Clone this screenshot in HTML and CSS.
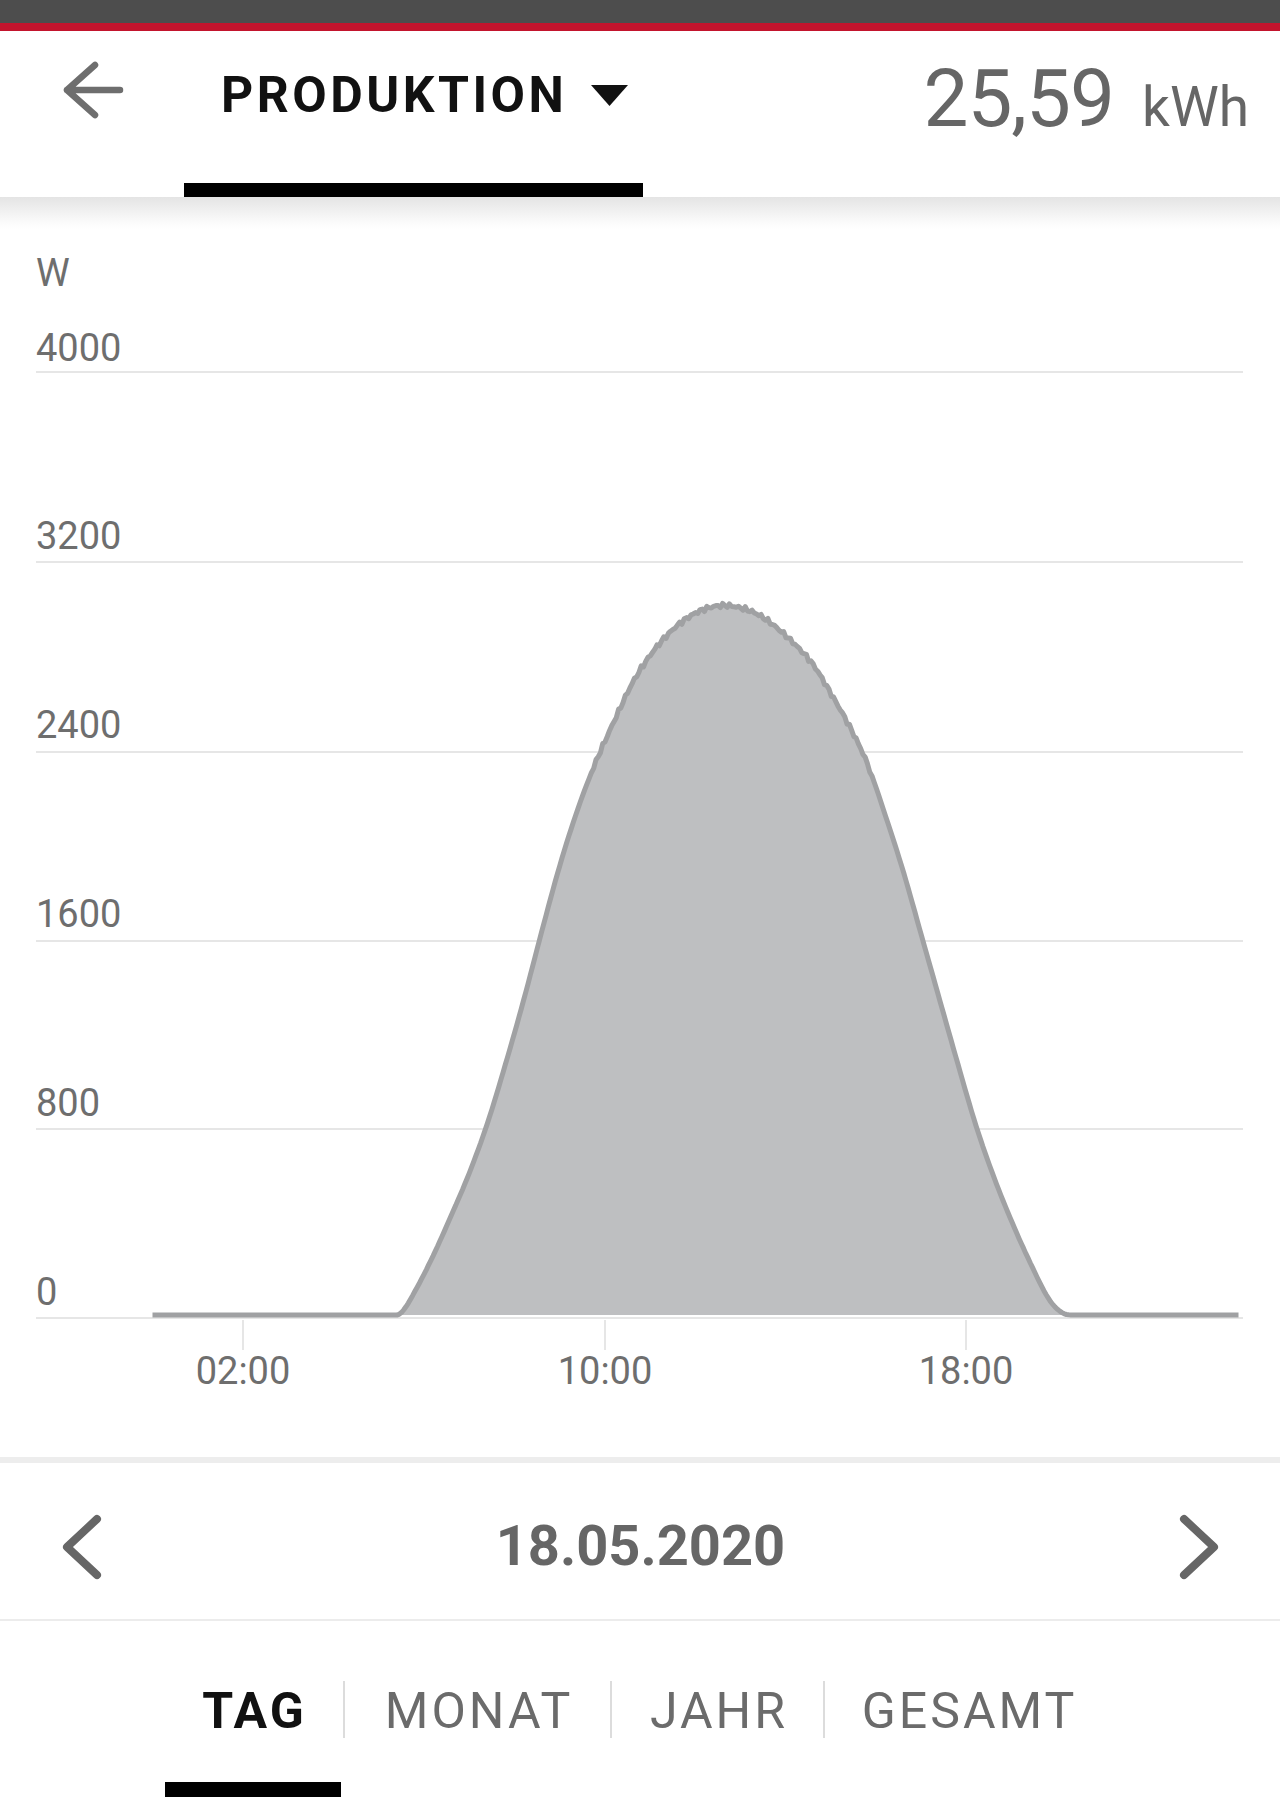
FILE: index.html
```html
<!DOCTYPE html>
<html lang="de">
<head>
<meta charset="UTF-8" />
<title>Produktion</title>
<link rel="stylesheet" href="styles.css">
</head>
<body>

<div class="statusbar"></div>

<header class="topbar">
  <button class="back" aria-label="Zurück">
    <svg width="62" height="58" viewBox="0 0 62 58">
      <path d="M33 4 L5 29 L33 54 M5 29 H58" fill="none" stroke="#6e6e6e" stroke-width="6.5" stroke-linecap="round" stroke-linejoin="round"/>
    </svg>
  </button>
  <div class="tab">
    <div class="tab-label">PRODUKTION
      <svg class="caret" width="37" height="21" viewBox="0 0 37 21"><path d="M0 0 H37 L18.5 21 Z" fill="#111"/></svg>
    </div>
  </div>
  <div class="total">
    <span class="total-value">25,59</span>
    <span class="total-unit">kWh</span>
  </div>
</header>

<div class="shade"></div>

<section class="chart">
  <svg width="1280" height="1228" viewBox="0 0 1280 1228">
    <g class="grid">
      <line x1="36" x2="1243" y1="143" y2="143"/>
      <line x1="36" x2="1243" y1="333" y2="333"/>
      <line x1="36" x2="1243" y1="523" y2="523"/>
      <line x1="36" x2="1243" y1="712" y2="712"/>
      <line x1="36" x2="1243" y1="900" y2="900"/>
      <line x1="36" x2="1243" y1="1089" y2="1089"/>
      <line x1="243" x2="243" y1="1091" y2="1121"/>
      <line x1="605" x2="605" y1="1091" y2="1121"/>
      <line x1="966" x2="966" y1="1091" y2="1121"/>
    </g>
    <g class="axis-label">
      <text x="36" y="57">W</text>
      <text x="36" y="132">4000</text>
      <text x="36" y="320">3200</text>
      <text x="36" y="509">2400</text>
      <text x="36" y="698">1600</text>
      <text x="36" y="887">800</text>
      <text x="36" y="1076">0</text>
    </g>
    <g class="axis-label time">
      <text x="243" y="1155">02:00</text>
      <text x="605" y="1155">10:00</text>
      <text x="966" y="1155">18:00</text>
    </g>
    <path id="area" class="area" d=""/>
    <path id="line" class="line" d=""/>
  </svg>
</section>

<div class="divider"></div>

<nav class="datebar">
  <svg width="48" height="72" viewBox="0 0 48 72"><path d="M40 8 L10 36 L40 64" fill="none" stroke="#666" stroke-width="8" stroke-linecap="round" stroke-linejoin="round"/></svg>
  <div class="date">18.05.2020</div>
  <svg width="48" height="72" viewBox="0 0 48 72"><path d="M8 8 L38 36 L8 64" fill="none" stroke="#666" stroke-width="8" stroke-linecap="round" stroke-linejoin="round"/></svg>
</nav>

<nav class="periods">
  <div class="period active p-tag">TAG</div>
  <span class="sep"></span>
  <div class="period p-monat">MONAT</div>
  <span class="sep"></span>
  <div class="period p-jahr">JAHR</div>
  <span class="sep"></span>
  <div class="period p-gesamt">GESAMT</div>
</nav>

<script>
  // Leistungswerte (Stunde, Watt) des Tages
  const knots = [
    [0, 0], [5.3, 0], [5.5, 10], [5.8, 100], [6.2, 250], [6.6, 420], [7.0, 600],
    [7.4, 810], [7.8, 1060], [8.2, 1330], [8.6, 1620], [9.0, 1900], [9.4, 2140],
    [9.8, 2340], [10.2, 2510], [10.6, 2670], [11.0, 2790], [11.4, 2880], [11.8, 2945],
    [12.2, 2985], [12.6, 3000], [13.0, 2990], [13.4, 2960], [13.8, 2905], [14.2, 2835],
    [14.6, 2750], [15.0, 2625], [15.4, 2490], [15.8, 2330], [16.2, 2110], [16.6, 1870],
    [17.0, 1600], [17.4, 1330], [17.8, 1060], [18.2, 800], [18.6, 580], [19.0, 390],
    [19.4, 220], [19.8, 70], [20.1, 10], [20.4, 0], [24, 0]
  ];

  const x0 = 152.5, pxPerHour = 45.25;
  const y0 = 1086, pxPerWatt = 0.2365;

  // Hermite-Spline durch die Stützstellen
  function valueAt(h) {
    const n = knots.length;
    for (let i = 1; i < n; i++) {
      if (h <= knots[i][0]) {
        const p0 = knots[Math.max(i - 2, 0)], p1 = knots[i - 1];
        const p2 = knots[i], p3 = knots[Math.min(i + 1, n - 1)];
        const span = p2[0] - p1[0];
        const t = (h - p1[0]) / span;
        const m1 = (p2[1] - p0[1]) / (p2[0] - p0[0] || 1) * span;
        const m2 = (p3[1] - p1[1]) / (p3[0] - p1[0] || 1) * span;
        const t2 = t * t, t3 = t2 * t;
        const v = (2 * t3 - 3 * t2 + 1) * p1[1] + (t3 - 2 * t2 + t) * m1 +
                  (-2 * t3 + 3 * t2) * p2[1] + (t3 - t2) * m2;
        return Math.max(v, 0);
      }
    }
    return 0;
  }

  let pts = [];
  for (let i = 0; i <= 480; i++) {
    const h = i / 20;
    let w = valueAt(h);
    if (w > 2300) w += Math.sin(i * 1.9) * 6 + Math.sin(i * 3.7) * 5;
    pts.push((x0 + h * pxPerHour).toFixed(1) + ' ' + (y0 - w * pxPerWatt).toFixed(1));
  }

  const linePath = 'M' + pts.join(' L');
  document.getElementById('line').setAttribute('d', linePath);
  document.getElementById('area').setAttribute('d', linePath + ' L' + (x0 + 24 * pxPerHour) + ' ' + y0 + ' L' + x0 + ' ' + y0 + ' Z');
</script>

</body>
</html>
```

FILE: styles.css
```css
* {
  box-sizing: border-box;
}
body {
  margin: 0;
  font-family: Roboto, 'Noto Sans', sans-serif;
  background: #fff;
  overflow: hidden;
}
.statusbar {
  height: 31px;
  background: #4d4d4d;
  border-bottom: 8px solid #c3142d;
}
.topbar {
  height: 166px;
  display: flex;
  align-items: flex-start;
  background: #fff;
}
.back {
  width: 184px;
  padding: 30px 0 0 62px;
  border: none;
  background: none;
  text-align: left;
  cursor: pointer;
}
.back svg {
  display: block;
}
.tab {
  width: 459px;
  height: 166px;
  padding: 39px 0 0 37px;
  border-bottom: 14px solid #000;
}
.tab-label {
  display: flex;
  align-items: center;
  font-size: 50px;
  line-height: 50px;
  font-weight: 700;
  letter-spacing: 3.5px;
  color: #111;
}
.caret {
  margin-left: 24px;
}
.total {
  margin-left: auto;
  padding: 29px 31px 0 0;
  display: flex;
  align-items: baseline;
  color: #666;
}
.total-value {
  font-size: 80px;
  line-height: 78px;
  letter-spacing: -1px;
}
.total-unit {
  font-size: 55px;
  margin-left: 28px;
}
.shade {
  height: 32px;
  background: linear-gradient(#e4e4e4, #fbfbfb 80%, #fff);
}
.chart svg {
  display: block;
}
.grid line {
  stroke: #e6e6e6;
  stroke-width: 2;
}
.axis-label text {
  font-family: Roboto, sans-serif;
  font-size: 38px;
  fill: #6e6e6e;
}
.axis-label.time text {
  text-anchor: middle;
}
.area {
  fill: #bebfc1;
}
.line {
  fill: none;
  stroke: #a0a1a3;
  stroke-width: 5;
  stroke-linejoin: round;
}
.divider {
  height: 6px;
  background: #ededed;
}
.datebar {
  height: 158px;
  display: flex;
  align-items: center;
  justify-content: space-between;
  padding: 12px 56px 0 57px;
  border-bottom: 2px solid #ececec;
}
.datebar svg {
  display: block;
}
.date {
  font-size: 56px;
  font-weight: 700;
  color: #666;
  padding-bottom: 2px;
}
.periods {
  height: 176px;
  display: flex;
  align-items: flex-start;
  padding-left: 165px;
}
.period {
  height: 176px;
  padding: 65px 0 0 3px;
  font-size: 50px;
  line-height: 50px;
  letter-spacing: 3px;
  text-align: center;
  color: #6b6b6b;
  border-bottom: 15px solid transparent;
}
.period.active {
  font-weight: 700;
  color: #111;
  border-bottom-color: #000;
}
.p-tag {
  width: 176px;
  margin-right: 2px;
}
.p-monat {
  width: 265px;
}
.p-jahr {
  width: 211px;
}
.p-gesamt {
  width: 286px;
}
.sep {
  width: 2px;
  height: 57px;
  margin-top: 60px;
  background: #dcdcdc;
}
```
